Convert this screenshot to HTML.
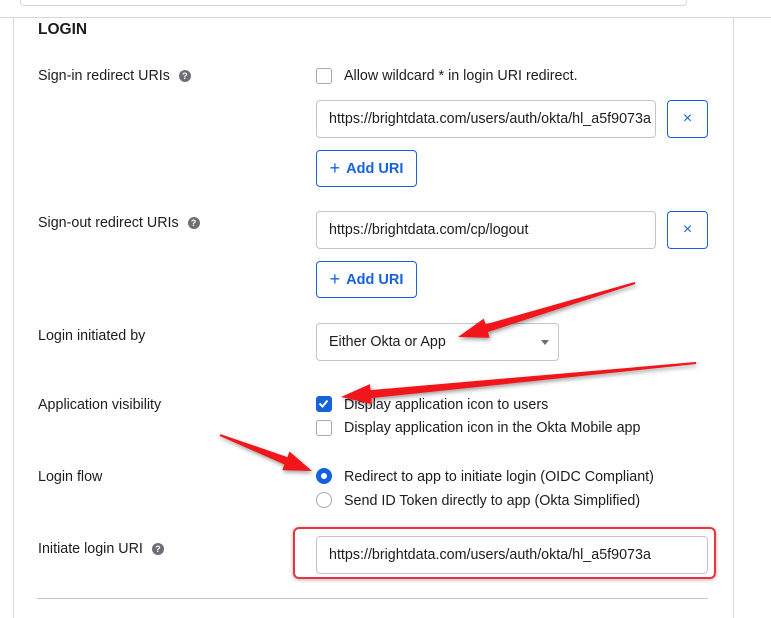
<!DOCTYPE html>
<html><head><meta charset="utf-8"><style>
*{box-sizing:border-box;margin:0;padding:0}
body{width:771px;height:609px;background:#fff;font-family:"Liberation Sans",sans-serif;color:#1d1d21;font-size:14.3px;position:relative;overflow:hidden}
.a{position:absolute;white-space:nowrap}
.inp{position:absolute;border:1px solid #c4c4cc;border-radius:4px;background:#fff;padding-left:12px;display:flex;align-items:center;overflow:hidden;white-space:nowrap}
.btn{position:absolute;border:1px solid #1662dd;border-radius:4px;color:#1662dd;display:flex;align-items:center;justify-content:center;font-weight:bold}
.q{display:inline-block;width:12px;height:12px;border-radius:50%;background:#6e6e78;color:#fff;font-size:9px;font-weight:bold;text-align:center;line-height:12px;vertical-align:1px;margin-left:9px}
.cb{position:absolute;width:16px;height:16px;border:1.5px solid #a7a7b0;border-radius:3px;background:#fff}
.rd{position:absolute;width:16px;height:16px;border:1.5px solid #a7a7b0;border-radius:50%}
</style></head><body>
<div class="a" style="left:20px;top:-10px;width:667px;height:16px;border:1px solid #d7d7dc;border-radius:4px"></div>
<div class="a" style="left:0;top:17px;width:771px;height:1px;background:#d7d7dc"></div>
<div class="a" style="left:13px;top:18px;width:1px;height:600px;background:#d7d7dc"></div>
<div class="a" style="left:733px;top:18px;width:1px;height:600px;background:#d7d7dc"></div>
<div class="a" style="left:38px;top:21px;font-size:15.5px;font-weight:bold">LOGIN</div>

<div class="a" style="left:38px;top:68px">Sign-in redirect URIs<span class="q">?</span></div>
<div class="cb" style="left:316px;top:68px"></div>
<div class="a" style="left:344px;top:68px">Allow wildcard * in login URI redirect.</div>
<div class="inp" style="left:316px;top:100px;width:340px;height:38px">https://brightdata.com/users/auth/okta/hl_a5f9073a</div>
<div class="btn" style="left:667px;top:100px;width:41px;height:38px;font-weight:normal;font-size:16px">×</div>
<div class="btn" style="left:316px;top:150px;width:101px;height:37px;font-size:14.5px"><span style="font-size:18px;font-weight:normal;margin-right:6px">+</span>Add URI</div>

<div class="a" style="left:38px;top:215px">Sign-out redirect URIs<span class="q">?</span></div>
<div class="inp" style="left:316px;top:211px;width:340px;height:38px">https://brightdata.com/cp/logout</div>
<div class="btn" style="left:667px;top:211px;width:41px;height:38px;font-weight:normal;font-size:16px">×</div>
<div class="btn" style="left:316px;top:261px;width:101px;height:37px;font-size:14.5px"><span style="font-size:18px;font-weight:normal;margin-right:6px">+</span>Add URI</div>

<div class="a" style="left:38px;top:328px">Login initiated by</div>
<div class="inp" style="left:316px;top:323px;width:243px;height:38px">Either Okta or App</div>
<div class="a" style="left:541px;top:340px;width:0;height:0;border-left:4px solid transparent;border-right:4px solid transparent;border-top:5px solid #6e6e78"></div>

<div class="a" style="left:38px;top:397px">Application visibility</div>
<div class="cb" style="left:316px;top:396px;background:#1662dd;border-color:#1662dd"><svg width="13" height="13" viewBox="0 0 13 13" style="position:absolute;left:0;top:0"><path d="M2.5 6.5l3 3 5-6" stroke="#fff" stroke-width="2" fill="none"/></svg></div>
<div class="a" style="left:344px;top:397px">Display application icon to users</div>
<div class="cb" style="left:316px;top:420px"></div>
<div class="a" style="left:344px;top:420px">Display application icon in the Okta Mobile app</div>

<div class="a" style="left:38px;top:469px">Login flow</div>
<div class="rd" style="left:316px;top:468px;border:5px solid #1662dd"></div>
<div class="a" style="left:344px;top:469px">Redirect to app to initiate login (OIDC Compliant)</div>
<div class="rd" style="left:316px;top:492px"></div>
<div class="a" style="left:344px;top:493px">Send ID Token directly to app (Okta Simplified)</div>

<div class="a" style="left:38px;top:541px">Initiate login URI<span class="q">?</span></div>
<div class="a" style="left:293px;top:527px;width:423px;height:52px;border:2px solid #e8343f;border-radius:6px;box-shadow:0 1px 4px rgba(0,0,0,.3)"></div>
<div class="inp" style="left:316px;top:536px;width:392px;height:38px">https://brightdata.com/users/auth/okta/hl_a5f9073a</div>
<div class="a" style="left:37px;top:598px;width:671px;height:1px;background:#c4c4cc"></div>

<svg class="a" style="left:0;top:0" width="771" height="609"><defs><filter id="s"><feDropShadow dx="1" dy="2" stdDeviation="2" flood-opacity=".4"/></filter></defs>
<g fill="#f0161a" filter="url(#s)">
<polygon points="634.7,282 485.5,324.4 483.8,318.6 458,337 489.6,337.8 487.9,332 635.3,284"/>
<polygon points="695.9,362 370.5,390.1 369.9,384.1 341,397 371.9,404.1 371.3,398.1 696.1,364"/>
<polygon points="220.4,434.1 287.4,457.1 289.5,451.5 312,471 282.3,470.1 284.4,464.5 219.6,435.9"/>
</g></svg>
</body></html>
